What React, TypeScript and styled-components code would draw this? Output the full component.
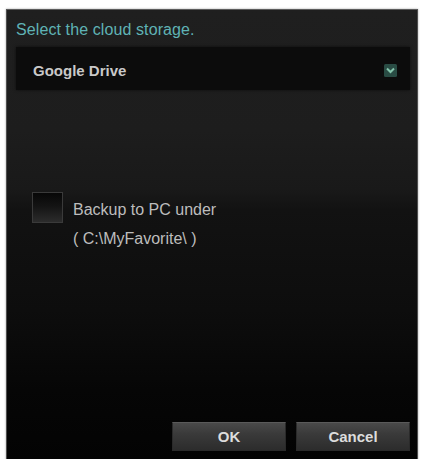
import React from "react";
import styled, { createGlobalStyle } from "styled-components";

const Global = createGlobalStyle`
  html, body { margin: 0; padding: 0; background: #ffffff; }
  body { font-family: "Liberation Sans", Arial, sans-serif; }
`;

const Dialog = styled.div`
  box-sizing: border-box;
  margin: 9px 0 0 6px;
  width: 412px;
  height: 452px;
  border: 1px solid #4e4e4e;
  border-top-color: #5c5c5c;
  box-shadow: 0 0 2px rgba(0, 0, 0, 0.35);
  background: linear-gradient(
    to bottom,
    #1f1f1f 0px,
    #1d1d1d 120px,
    #191919 180px,
    #121212 200px,
    #0d0d0d 300px,
    #060606 380px,
    #030303 100%
  );
  display: flex;
  flex-direction: column;
`;

const Title = styled.div`
  padding: 10px 0 0 9px;
  font-size: 16px;
  line-height: 20px;
  letter-spacing: 0.1px;
  color: #5fb3b5;
`;

const Select = styled.div`
  box-sizing: border-box;
  margin: 7px 7px 0 9px;
  height: 43px;
  background: #0c0c0c;
  box-shadow: 0 0 3px rgba(0, 0, 0, 0.6);
  display: flex;
  align-items: center;
  justify-content: space-between;
  padding: 4px 13px 0 17px;
`;

const SelectText = styled.span`
  font-size: 15px;
  font-weight: bold;
  color: #c9c9c9;
`;

const CheckRow = styled.div`
  display: flex;
  align-items: flex-start;
  margin: 102px 0 0 25px;
  gap: 10px;
`;

const CheckBox = styled.div`
  box-sizing: border-box;
  width: 31px;
  height: 31px;
  border: 1px solid #3a3a3a;
  background: linear-gradient(to bottom, #070707 0%, #141414 45%, #2c2c2c 100%);
`;

const CheckLabel = styled.div`
  margin-top: 3px;
  font-size: 16px;
  line-height: 29px;
  color: #bdbdbd;
`;

const Spacer = styled.div`
  flex: 1;
`;

const Footer = styled.div`
  display: flex;
  justify-content: flex-end;
  gap: 10px;
  padding: 0 7px 9px 0;
`;

const Button = styled.button`
  box-sizing: border-box;
  width: 114px;
  height: 29px;
  border: 1px solid #2a2a2a;
  border-top-color: #5a5a5a;
  background: linear-gradient(to bottom, #4a4a4a 0%, #3a3a3a 40%, #2c2c2c 100%);
  color: #dcdcdc;
  font-family: "Liberation Sans", Arial, sans-serif;
  font-size: 15px;
  font-weight: bold;
  padding: 0;
`;

const Chevron = () => (
  <svg width="13" height="13" viewBox="0 0 13 13">
    <rect x="0" y="0" width="13" height="13" rx="1.5" fill="#294c44" />
    <path d="M3 4.5 L6.5 8 L10 4.5" stroke="#86c6ad" strokeWidth="2" fill="none" />
  </svg>
);

export default function App() {
  return (
    <>
      <Global />
      <Dialog>
        <Title>Select the cloud storage.</Title>
        <Select>
          <SelectText>Google Drive</SelectText>
          <Chevron />
        </Select>
        <CheckRow>
          <CheckBox />
          <CheckLabel>
            Backup to PC under
            <br />( C:\MyFavorite\ )
          </CheckLabel>
        </CheckRow>
        <Spacer />
        <Footer>
          <Button>OK</Button>
          <Button>Cancel</Button>
        </Footer>
      </Dialog>
    </>
  );
}
